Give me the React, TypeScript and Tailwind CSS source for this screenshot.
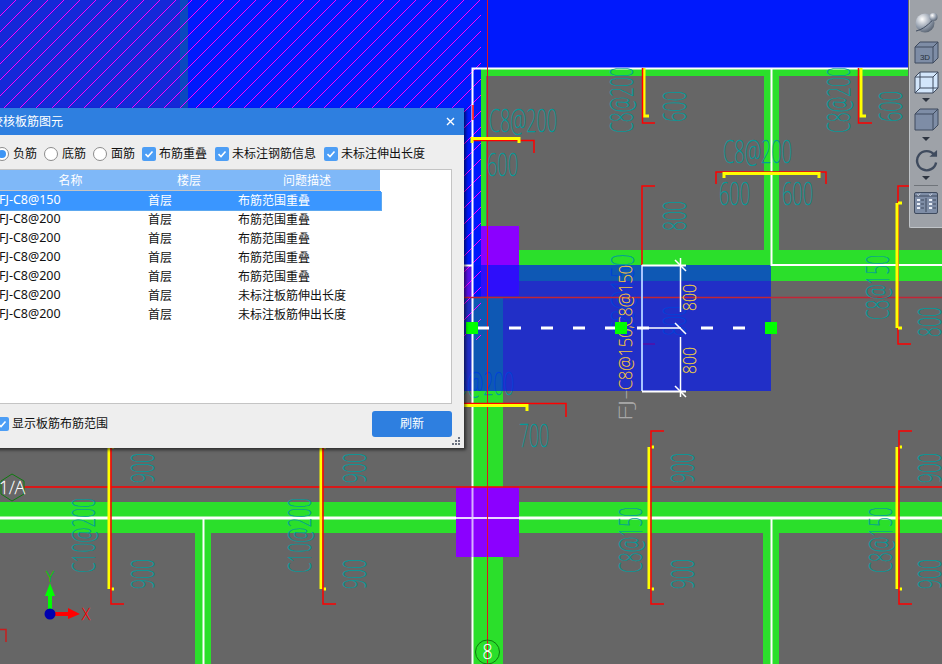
import React from 'react';

const TEAL = '#009c9c';
const RED = '#ff0000';
const YELLOW = '#ffff00';
const GREEN = '#2bdf2b';
const WHITE = '#ffffff';
const BLUE = '#0019fc';

const ROWS = [
  ['FJ-C8@150', '首层', '布筋范围重叠'],
  ['FJ-C8@200', '首层', '布筋范围重叠'],
  ['FJ-C8@200', '首层', '布筋范围重叠'],
  ['FJ-C8@200', '首层', '布筋范围重叠'],
  ['FJ-C8@200', '首层', '布筋范围重叠'],
  ['FJ-C8@200', '首层', '未标注板筋伸出长度'],
  ['FJ-C8@200', '首层', '未标注板筋伸出长度'],
];

// thin squeezed cad text, x/y is the start of the baseline
const Cad: React.FC<{ x: number; y: number; len: number; t: string; up?: boolean; c?: string; size?: number }> = ({ x, y, len, t, up, c = TEAL, size = 32 }) => (
  <text
    x={x}
    y={y}
    textLength={len}
    lengthAdjust="spacingAndGlyphs"
    transform={up ? `rotate(-90 ${x} ${y})` : undefined}
    fontFamily="'Noto Sans', sans-serif"
    fontWeight={100}
    fontSize={size}
    fill={c}
    stroke={c}
    strokeWidth={0.35}
  >
    {t}
  </text>
);

const P: React.FC<{ d: string; c?: string; w?: number }> = ({ d, c = RED, w = 1.5 }) => (
  <path d={d} fill="none" stroke={c} strokeWidth={w} />
);

// vertical bar with its red bracket
const VBar: React.FC<{ x: number; top?: number }> = ({ x, top = 447 }) => (
  <>
    <P d={`M${x} ${top}V589`} c={YELLOW} w={3} />
    <rect x={x + 2} y={top - 1.5} width={3} height={3} fill={YELLOW} />
    <rect x={x + 2} y={587.5} width={3} height={3} fill={YELLOW} />
    <P d={`M${x + 15} 431H${x + 2}V604H${x + 15}`} />
  </>
);

const Drawing: React.FC = () => (
  <svg width={942} height={664} viewBox="0 0 942 664" className="block">
    <defs>
      <clipPath id="hatchArea">
        <rect width={481} height={340} />
      </clipPath>
    </defs>
    <rect width={942} height={664} fill="#666666" />

    {/* blue slab above and left of the grid */}
    <rect width={908} height={68} fill={BLUE} />
    <rect x={0} y={68} width={481} height={229} fill={BLUE} />
    <rect width={180} height={108} fill="#1528d8" />
    <rect x={180} width={8} height={108} fill="#0a48c0" />

    {/* walls */}
    <rect x={481} y={68} width={427} height={8} fill={GREEN} />
    <rect x={481} y={76} width={5} height={150} fill={GREEN} />
    <rect x={473} y={297} width={30} height={367} fill={GREEN} />
    <rect x={764} y={76} width={15} height={180} fill={GREEN} />
    <rect x={519} y={250} width={423} height={31} fill={GREEN} />
    <rect x={0} y={502} width={942} height={31} fill={GREEN} />
    <rect x={195} y={533} width={16} height={131} fill={GREEN} />
    <rect x={763} y={533} width={16} height={131} fill={GREEN} />
    <rect x={481} y={226} width={38} height={70} fill="#8b00ff" />

    {/* text under the overlay */}
    <Cad x={446} y={395} len={68} t="C8@200" />
    <Cad up x={634} y={335} len={81} t="C8@150" />
    <Cad up x={686} y={336} len={30} t="800" />
    <P d="M655 186H642V344H655" />

    {/* selected slab range */}
    <rect x={464} y={265} width={307} height={126} fill="#0015f8" fillOpacity={0.67} />
    <rect x={464} y={266} width={8} height={31} fill="#5a12e8" />

    <g stroke="#ff00ff" strokeWidth={1} clipPath="url(#hatchArea)" shapeRendering="crispEdges">
      {Array.from({ length: 53 }, (_, i) => (
        <line key={i} x1={i * 16 - 340} y1={340} x2={i * 16} y2={0} />
      ))}
    </g>

    {/* white wall axes */}
    <P d="M908 68.5H472.5V664" c={WHITE} w={2} />
    <P d="M771.5 68V265H942" c={WHITE} w={2} />
    <P d="M464 265.5H472" c={WHITE} w={2} />
    <P d="M0 518H942" c={WHITE} w={3} />
    <P d="M203.500 518V664" c={WHITE} w={2} />
    <P d="M771.500 518V664" c={WHITE} w={2} />
    <rect x={456} y={487} width={63} height={70} fill="#8b00ff" />
    <P d="M472.500 487V557" c="#d8b0ff" w={2} />
    <P d="M456 518H519" c="#e8d8ff" w={2} />

    {/* grid lines */}
    <P d="M487.500 0V664" c="#e0141e" w={1} />
    <P d="M464 297.500H942" c="#c22636" w={1.5} />
    <P d="M24 487H942" c={RED} w={1.5} />

    {/* bar labels */}
    <Cad x={489} y={132} len={68} t="C8@200" />
    <Cad x={487} y={176} len={31} t="600" />
    <Cad x={723} y={163} len={69} t="C8@200" />
    <Cad x={719} y={205} len={31} t="600" />
    <Cad x={782} y={205} len={31} t="600" />
    <Cad x={519} y={447} len={30} t="700" />
    <Cad up x={633} y={133} len={66} t="C8@200" />
    <Cad up x={850} y={133} len={66} t="C8@200" />
    <Cad up x={686} y={122} len={31} t="600" />
    <Cad up x={902} y={122} len={31} t="600" />
    <Cad up x={686} y={231} len={30} t="800" />
    <Cad up x={642} y={573} len={66} t="C8@150" />
    <Cad up x={892} y={573} len={66} t="C8@150" />
    <Cad up x={889} y={320} len={65} t="C8@150" />
    <Cad up x={941} y={337} len={30} t="800" />
    <Cad up x={95} y={573} len={75} t="C10@200" />
    <Cad up x={311} y={573} len={75} t="C10@200" />
    {[154, 366, 694, 941].flatMap(x => [483, 589].map(y => <Cad key={`${x}-${y}`} up x={x} y={y} len={30} t="900" />))}

    {/* bars */}
    <P d="M644 68V116H649" c={YELLOW} w={3} />
    <P d="M642.500 68V123H655" />
    <P d="M861 68V116H866" c={YELLOW} w={3} />
    <P d="M858.500 68V123H872" />
    <P d="M473 120V105" />
    <P d="M472 140.500H534V153" />
    <P d="M472 143V138.500H519V143" c={YELLOW} w={3} />
    <P d="M716 184V172H826V184" />
    <P d="M724 178V173.500H819V178" c={YELLOW} w={3} />
    <P d="M464 403.500H566V417" />
    <P d="M464 405.500H527V411" c={YELLOW} w={3} />
    <P d="M911 186H898V344H911" />
    <P d="M897 203V328" c={YELLOW} w={3} />
    <rect x={898} y={201.500} width={4} height={3} fill={YELLOW} />
    <rect x={898} y={326.500} width={4} height={3} fill={YELLOW} />
    <VBar x={109} />
    <VBar x={321} />
    <VBar x={649} />
    <VBar x={897} />
    <P d="M0 629.500H6V642" c="#c81e1e" />

    {/* dimension */}
    <P d="M642 265V391" c="#a8c4ff" w={2} />
    <P d="M642 265.500H686M642 391.500H686" c={WHITE} w={2} />
    <P d="M680.500 258V312M680.500 337V397M649 328H681" c={WHITE} w={1.5} />
    <P d="M675 260L686 271M675 323L686 334M675 386L686 397" c={WHITE} w={1.5} />

    <Cad up x={696} y={311} len={27} t="800" c="#f0d040" size={18} />
    <Cad up x={696} y={374} len={27} t="800" c="#f0d040" size={18} />
    <Cad up x={632} y={421} len={31} t="FJ-" c="#aaaaaa" size={18} />
    <Cad up x={632} y={390} len={125} t="C8@150,C8@150" c="#f0c040" size={18} />

    {/* section line */}
    {[477, 509, 541, 573, 605, 637, 701, 733].map(x => (
      <rect key={x} x={x} y={326.500} width={12} height={3} fill={WHITE} />
    ))}
    {[472, 621, 771].map(x => (
      <rect key={x} x={x - 6} y={322} width={12} height={12} fill="#00ff00" />
    ))}

    {/* grid bubbles */}
    <circle cx={487.500} cy={652} r={12} fill="none" stroke="#0f7a0f" strokeWidth={1} />
    <Cad x={482.500} y={659} len={10} t="8" c={WHITE} size={20} />
    <polygon points="12,474 24,481 24,494 12,501 1,494 1,481" fill="none" stroke="#0f7a0f" strokeWidth={1} />
    <Cad x={-1} y={494} len={26} t="1/A" c={WHITE} size={19} />

    {/* ucs */}
    <rect x={48} y={596} width={4} height={16} fill="#00ff00" />
    <polygon points="45,596 55,596 50,583" fill="#00ff00" />
    <rect x={55} y={612} width={14} height={4} fill={RED} />
    <polygon points="68,608 68,619 80,614" fill={RED} />
    <circle cx={50} cy={614} r={5.500} fill="#0000b0" />
    <Cad x={46} y={582} len={8} t="Y" c="#00d000" size={14} />
    <Cad x={82} y={620} len={8} t="X" c={RED} size={16} />
  </svg>
);

const Radio: React.FC<{ on?: boolean }> = ({ on }) => (
  <span className="flex h-[14px] w-[14px] shrink-0 items-center justify-center rounded-full border border-[#8c8c8c] bg-white">
    {on && <span className="h-[8px] w-[8px] rounded-full bg-[#3d95f5]" />}
  </span>
);

const Check: React.FC = () => (
  <span className="flex h-[14px] w-[14px] shrink-0 items-center justify-center rounded-[2px] bg-[#4d9ef5]">
    <svg width={10} height={10} viewBox="0 0 10 10">
      <path d="M1.500 5.200L4 7.500L8.500 2.500" fill="none" stroke="#fff" strokeWidth={1.6} />
    </svg>
  </span>
);

const Dialog: React.FC = () => (
  <div className="absolute left-[-20px] top-[108px] flex h-[340px] w-[484px] flex-col bg-[#eeeeee] text-[12px] leading-none text-[#111] shadow-[2px_2px_3px_rgba(0,0,0,0.55)]">
    <div className="flex h-[27px] shrink-0 items-center justify-between bg-[#2e7fe0] pl-[11px] pr-[9px] text-[12px] text-white">
      <span>校核板筋图元</span>
      <svg width={9} height={9} viewBox="0 0 9 9">
        <path d="M1 1L8 8M8 1L1 8" stroke="#fff" strokeWidth={1.4} />
      </svg>
    </div>
    <div className="flex h-[34px] shrink-0 items-center pl-[15px] pt-[4px]">
      <div className="flex items-center gap-[4px]"><Radio on /><span>负筋</span></div>
      <div className="ml-[7px] flex items-center gap-[4px]"><Radio /><span>底筋</span></div>
      <div className="ml-[7px] flex items-center gap-[4px]"><Radio /><span>面筋</span></div>
      <div className="ml-[7px] flex items-center gap-[3px]"><Check /><span>布筋重叠</span></div>
      <div className="ml-[8px] flex items-center gap-[3px]"><Check /><span>未标注钢筋信息</span></div>
      <div className="ml-[8px] flex items-center gap-[3px]"><Check /><span>未标注伸出长度</span></div>
    </div>
    <div className="h-[235px] w-[472px] shrink-0 border border-[#c4c4c4] bg-white">
      <div className="grid h-[21px] w-[399px] grid-cols-[163px_90px_146px] items-center border-b border-[#c4c4c4] bg-[#7fb8f8] pt-[1px] text-center text-white">
        <span className="pl-4">名称</span>
        <span>楼层</span>
        <span>问题描述</span>
      </div>
      {ROWS.map((r, i) => (
        <div
          key={i}
          className={
            i === 0
              ? 'relative grid h-[19px] w-[400px] grid-cols-[167px_90px_143px] items-center bg-[#3a96ff] text-white shadow-[1px_1px_0_#5ca8f0]'
              : 'grid h-[19px] w-[400px] grid-cols-[167px_90px_143px] items-center'
          }
        >
          <span className="pl-[18px] text-[12.5px]">{r[0]}</span>
          <span>{r[1]}</span>
          <span>{r[2]}</span>
        </div>
      ))}
    </div>
    <div className="relative flex flex-1 items-center justify-between pb-[5px] pl-[15px] pr-[12px]">
      <div className="flex items-center gap-[3px]"><Check /><span>显示板筋布筋范围</span></div>
      <button className="flex h-[26px] w-[80px] items-center justify-center rounded-[3px] bg-[#2e7fe0] text-white">刷新</button>
      <svg width={8} height={8} viewBox="0 0 8 8" className="absolute bottom-[3px] right-[4px]">
        <path d="M6 0h2v2H6zM3 3h2v2H3zM6 3h2v2H6zM0 6h2v2H0zM3 6h2v2H3zM6 6h2v2H6z" fill="#6b7280" />
      </svg>
    </div>
  </div>
);

const STROKE = '#3f4b5e';
const FACE = '#7e8da6';

const Cube: React.FC<{ wire?: boolean; label?: boolean }> = ({ wire, label }) => (
  <svg width={25} height={23} viewBox="0 0 25 23">
    <path d="M1 6L6 1H24V17L19 22H1Z" fill={wire ? '#d3e6fb' : FACE} stroke={STROKE} strokeWidth={1} />
    <path d="M1 6H19V22M19 6L24 1" fill="none" stroke={STROKE} strokeWidth={1} />
    {wire && <path d="M6 1V17H24M6 17L1 22" fill="none" stroke={STROKE} strokeWidth={1} />}
    {label && <text x={11} y={19} textAnchor="middle" fontFamily="'Liberation Sans', sans-serif" fontSize={8} fill="#28303c">3D</text>}
  </svg>
);

const Caret: React.FC = () => <div className="h-0 w-0 border-x-[4px] border-t-[4px] border-x-transparent border-t-[#2d3440]" />;

const Toolbar: React.FC = () => (
  <div className="absolute left-[909px] top-0 flex h-[228px] w-[33px] flex-col items-center rounded-bl-[2px] border-b border-l border-[#c0c4c8] bg-[#9ea2a8] pt-[11px]">
    <svg width={25} height={22} viewBox="0 0 25 22" className="shrink-0">
      <defs>
        <radialGradient id="orb" cx="0.35" cy="0.3" r="0.8">
          <stop offset="0" stopColor="#ffffff" />
          <stop offset="0.6" stopColor="#8d98a8" />
          <stop offset="1" stopColor="#4e5866" />
        </radialGradient>
      </defs>
      <circle cx={11} cy={12} r={9.500} fill="url(#orb)" />
      <path d="M2 20C8 19 16 13 21 6" fill="none" stroke="#3f4b5e" strokeWidth={1} />
      <circle cx={19.500} cy={6} r={4} fill="url(#orb)" />
    </svg>
    <div className="mt-[8px] shrink-0"><Cube label /></div>
    <div className="mt-[7px] shrink-0"><Cube wire /></div>
    <div className="mt-[4px] shrink-0"><Caret /></div>
    <div className="mt-[6px] shrink-0"><Cube /></div>
    <div className="mt-[6px] shrink-0"><Caret /></div>
    <svg width={23} height={23} viewBox="0 0 24 24" className="mt-[8px] shrink-0">
      <path d="M20 6A10 10 0 1 0 22 14" fill="none" stroke="#3f4b5e" strokeWidth={2.5} />
      <path d="M15 8H23V1Z" fill="#3f4b5e" />
    </svg>
    <div className="mt-[4px] shrink-0"><Caret /></div>
    <div className="mt-[5px] h-px w-[24px] shrink-0 bg-[#6f747a]" />
    <svg width={24} height={22} viewBox="0 0 24 22" className="mt-[6px] shrink-0">
      <rect x={0.500} y={0.500} width={23} height={21} rx={1.500} fill={FACE} stroke={STROKE} strokeWidth={1} />
      <path d="M0.500 4H23.500M12 6V20" stroke={STROKE} strokeWidth={1} />
      <path d="M3 2.500L4.500 3.500L6 1.500M15 2.500L16.500 3.500L18 1.500" fill="none" stroke="#e8eef6" strokeWidth={0.8} />
      <path d="M3 7h3v2H3zM3 11h3v2H3zM3 15h3v2H3zM15 7h3v2h-3zM15 11h3v2h-3zM15 15h3v2h-3z" fill="#e8eef6" />
      <path d="M7 8h3M7 12h3M7 16h3M19 8h3M19 12h3M19 16h3" stroke={STROKE} strokeWidth={1} />
    </svg>
  </div>
);

const App: React.FC = () => (
  <div className="relative h-[664px] w-[942px] overflow-hidden bg-[#666666] font-['Noto_Sans','Noto_Sans_CJK_SC',sans-serif]">
    <Drawing />
    <Dialog />
    <Toolbar />
  </div>
);

export default App;
